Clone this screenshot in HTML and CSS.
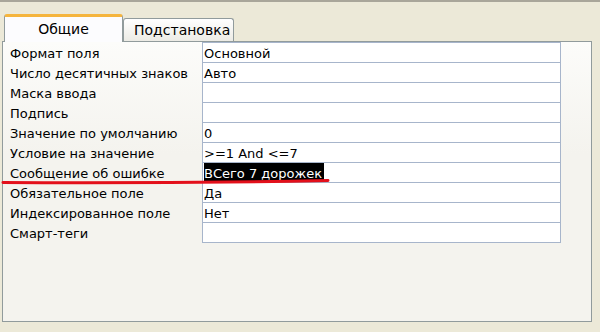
FILE: index.html
```html
<!DOCTYPE html>
<html lang="ru">
<head>
    <meta charset="UTF-8">
    <title>Свойства поля</title>
    <link rel="stylesheet" href="styles.css">
</head>
<body>

<div class="window">
    <div class="tabs">
        <div class="tab active">Общие</div>
        <div class="tab">Подстановка</div>
    </div>

    <div class="panel">
        <div class="props">
            <div class="row"><div class="name">Формат поля</div><div class="val">Основной</div></div>
            <div class="row"><div class="name">Число десятичных знаков</div><div class="val">Авто</div></div>
            <div class="row"><div class="name">Маска ввода</div><div class="val"></div></div>
            <div class="row"><div class="name">Подпись</div><div class="val"></div></div>
            <div class="row"><div class="name">Значение по умолчанию</div><div class="val">0</div></div>
            <div class="row"><div class="name">Условие на значение</div><div class="val">&gt;=1 And &lt;=7</div></div>
            <div class="row"><div class="name">Сообщение об ошибке</div><div class="val"><span class="selected">ВCего 7 дорожек</span></div></div>
            <div class="row"><div class="name">Обязательное поле</div><div class="val">Да</div></div>
            <div class="row"><div class="name">Индексированное поле</div><div class="val">Нет</div></div>
            <div class="row last"><div class="name">Смарт-теги</div><div class="val"></div></div>
        </div>
    </div>

    <!-- красная пометка поверх строки -->
    <svg class="mark" width="600" height="332" viewBox="0 0 600 332">
        <path d="M3 182.5 C 90 183, 220 182.5, 328 180.5" fill="none" stroke="#e3101b" stroke-width="3" stroke-linecap="round"/>
    </svg>
</div>

</body>
</html>
```

FILE: styles.css
```css
body {
    margin: 0;
    background-color: #ece9d8;
    font-family: "DejaVu Sans", Tahoma, sans-serif;
    font-size: 13px;
    color: #000;
}

.window {
    position: relative;
    width: 600px;
    height: 332px;
    border-top: 2px solid #a9a69a;
    box-sizing: border-box;
}

.tabs {
    display: flex;
    align-items: flex-end;
    height: 39px;
    padding-left: 4px;
}

.tab {
    height: 23px;
    padding: 0 10px;
    box-sizing: border-box;
    border: 1px solid #919b9c;
    border-bottom: none;
    border-radius: 3px 3px 0 0;
    background: linear-gradient(#ffffff, #ecebe5);
    line-height: 23px;
    font-size: 14px;
}

.tab.active {
    width: 119px;
    height: 28px;
    margin-bottom: -1px;
    position: relative;
    z-index: 1;
    text-align: center;
    background: #fcfcfe;
    border-top: 3px solid #f5b53e;
    line-height: 24px;
}

.tab + .tab {
    width: 111px;
    text-align: center;
}

.panel {
    width: 590px;
    height: 281px;
    margin-left: 2px;
    box-sizing: border-box;
    border: 1px solid #919b9c;
    background: linear-gradient(#fcfcfa, #f4f3ee 40%);
}

.props {
    display: flex;
    flex-direction: column;
}

.row {
    display: flex;
    height: 20px;
}

.row.last {
    height: 21px;
}

.name {
    width: 199px;
    padding: 2px 0 0 7px;
    box-sizing: border-box;
    line-height: 20px;
    white-space: nowrap;
}

.val {
    width: 359px;
    box-sizing: border-box;
    padding: 2px 0 0 1px;
    border: 1px solid #a7b5cb;
    border-bottom: none;
    background-color: #fff;
    line-height: 17px;
    white-space: nowrap;
}

.row.last .val {
    border-bottom: 1px solid #a7b5cb;
}

.selected {
    display: block;
    width: fit-content;
    margin-top: -2px;
    padding: 2px 2px 0 0;
    background-color: #000;
    color: #fff;
}

.mark {
    position: absolute;
    top: -2px;
    left: 0;
    pointer-events: none;
}
```
